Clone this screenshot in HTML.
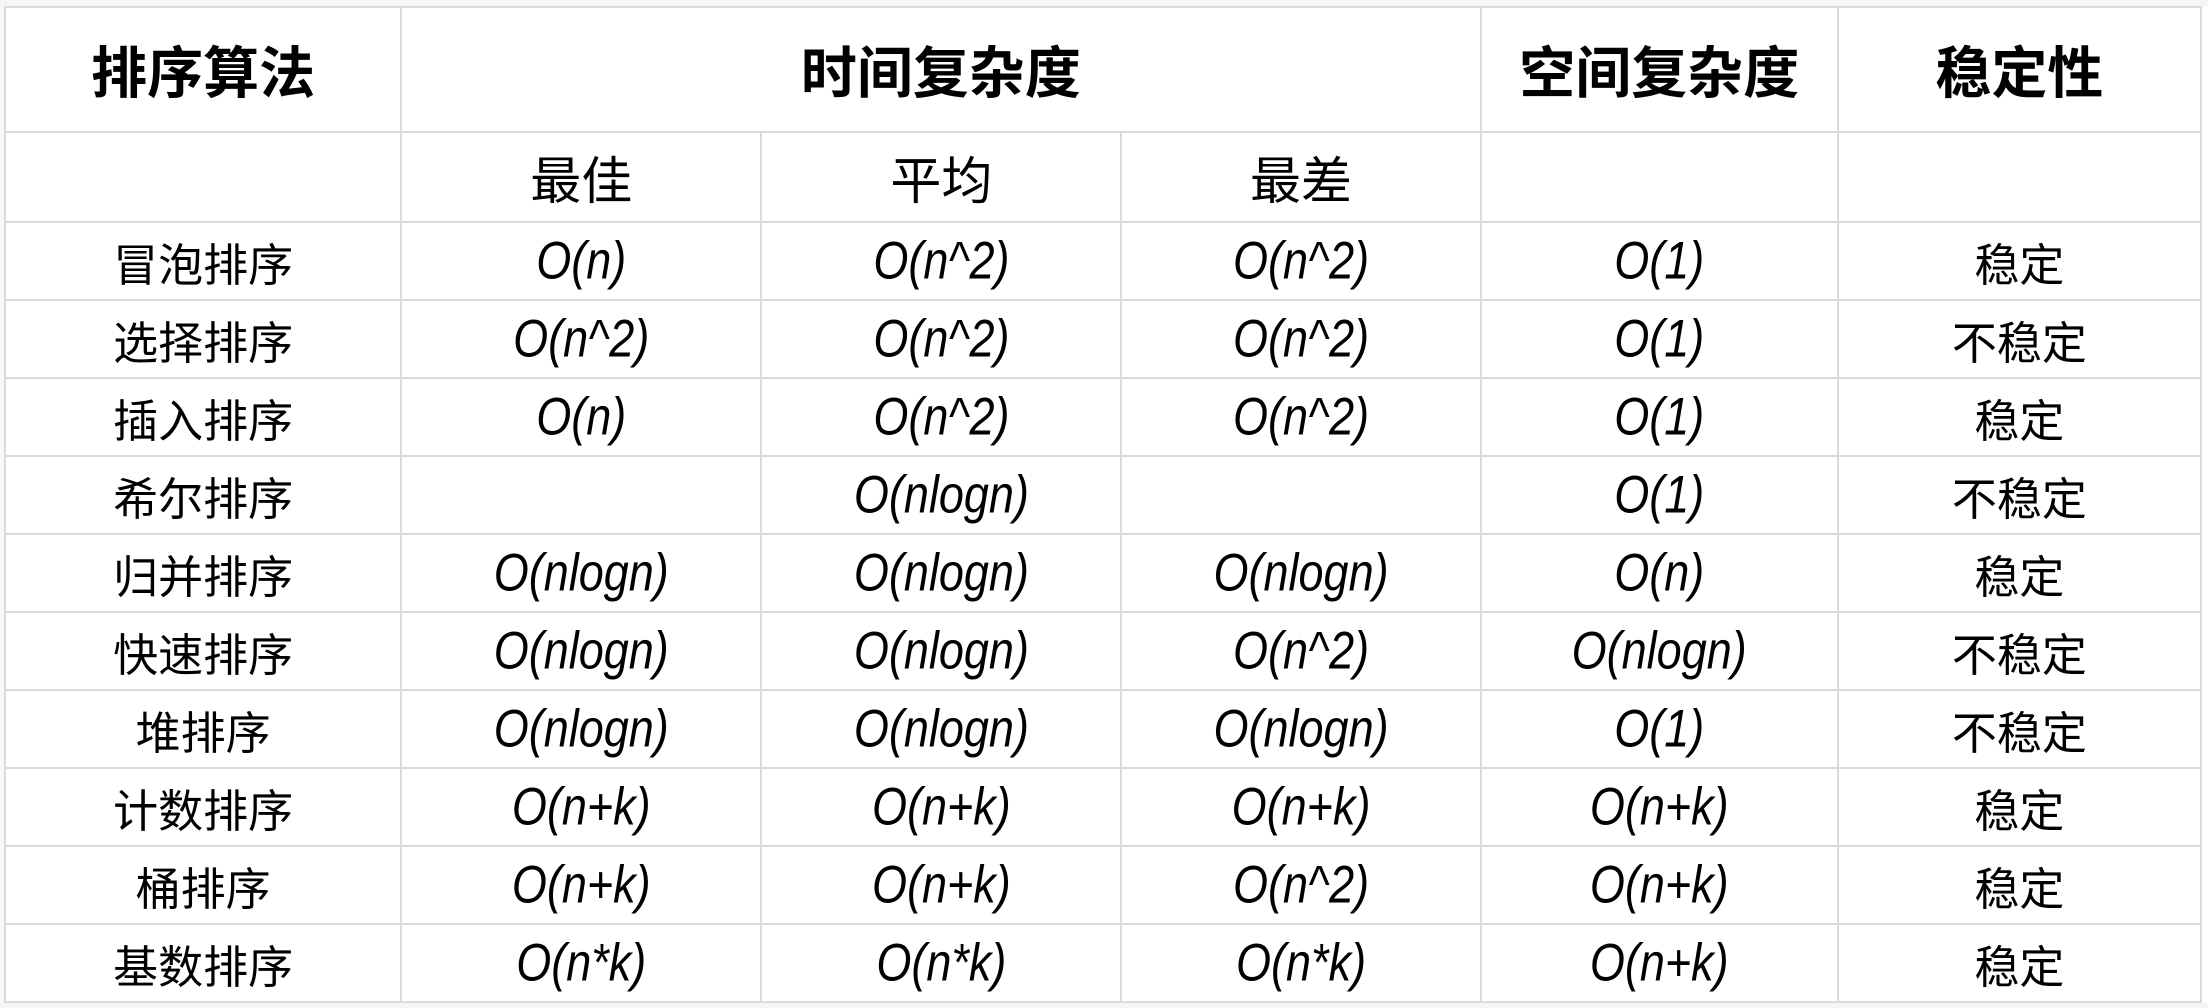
<!DOCTYPE html>
<html><head><meta charset="utf-8"><style>
html,body{margin:0;padding:0;background:#fff;width:2208px;height:1008px;overflow:hidden}
body{position:relative}
.top{position:absolute;left:0;top:0;width:2208px;height:6px;background:#f5f5f7}
.bot{position:absolute;left:0;top:1003px;width:2208px;height:5px;background:#f5f5f7}
.lft{position:absolute;left:0;top:0;width:4px;height:1008px;background:#f7f7f9}
table{position:absolute;left:4px;top:6px;border-collapse:collapse;table-layout:fixed;width:2198px}
td{border:2.5px solid #dadadd;padding:0;text-align:center;vertical-align:middle;color:#000;
font-family:"Liberation Sans","Noto Sans CJK SC",sans-serif;font-size:45px;white-space:nowrap;overflow:hidden}
tr{height:78px}
tr.h1{height:125px}
tr.h1 td{font-size:56px;font-weight:bold}
tr.h2{height:90px}
tr.h2 td{font-size:51px}
i{font-style:italic;display:inline-block;transform:scaleY(1.18)}
</style></head><body>
<div class="top"></div><div class="lft"></div><div class="bot"></div>
<table>
<colgroup><col style="width:396px"><col style="width:360px"><col style="width:360px"><col style="width:359px"><col style="width:357px"><col style="width:363px"></colgroup>
<tr class="h1"><td>排序算法</td><td colspan="3">时间复杂度</td><td>空间复杂度</td><td>稳定性</td></tr>
<tr class="h2"><td></td><td>最佳</td><td>平均</td><td>最差</td><td></td><td></td></tr>
<tr><td>冒泡排序</td><td><i>O(n)</i></td><td><i>O(n^2)</i></td><td><i>O(n^2)</i></td><td><i>O(1)</i></td><td>稳定</td></tr>
<tr><td>选择排序</td><td><i>O(n^2)</i></td><td><i>O(n^2)</i></td><td><i>O(n^2)</i></td><td><i>O(1)</i></td><td>不稳定</td></tr>
<tr><td>插入排序</td><td><i>O(n)</i></td><td><i>O(n^2)</i></td><td><i>O(n^2)</i></td><td><i>O(1)</i></td><td>稳定</td></tr>
<tr><td>希尔排序</td><td></td><td><i>O(nlogn)</i></td><td></td><td><i>O(1)</i></td><td>不稳定</td></tr>
<tr><td>归并排序</td><td><i>O(nlogn)</i></td><td><i>O(nlogn)</i></td><td><i>O(nlogn)</i></td><td><i>O(n)</i></td><td>稳定</td></tr>
<tr><td>快速排序</td><td><i>O(nlogn)</i></td><td><i>O(nlogn)</i></td><td><i>O(n^2)</i></td><td><i>O(nlogn)</i></td><td>不稳定</td></tr>
<tr><td>堆排序</td><td><i>O(nlogn)</i></td><td><i>O(nlogn)</i></td><td><i>O(nlogn)</i></td><td><i>O(1)</i></td><td>不稳定</td></tr>
<tr><td>计数排序</td><td><i>O(n+k)</i></td><td><i>O(n+k)</i></td><td><i>O(n+k)</i></td><td><i>O(n+k)</i></td><td>稳定</td></tr>
<tr><td>桶排序</td><td><i>O(n+k)</i></td><td><i>O(n+k)</i></td><td><i>O(n^2)</i></td><td><i>O(n+k)</i></td><td>稳定</td></tr>
<tr><td>基数排序</td><td><i>O(n*k)</i></td><td><i>O(n*k)</i></td><td><i>O(n*k)</i></td><td><i>O(n+k)</i></td><td>稳定</td></tr>
</table>
</body></html>
